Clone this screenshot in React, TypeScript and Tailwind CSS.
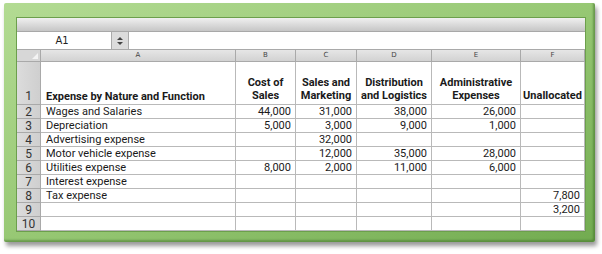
import React from 'react';

interface Row {
  n: number;
  label: string;
  b?: string;
  c?: string;
  d?: string;
  e?: string;
  f?: string;
}

const rows: Row[] = [
  { n: 2, label: 'Wages and Salaries', b: '44,000', c: '31,000', d: '38,000', e: '26,000' },
  { n: 3, label: 'Depreciation', b: '5,000', c: '3,000', d: '9,000', e: '1,000' },
  { n: 4, label: 'Advertising expense', c: '32,000' },
  { n: 5, label: 'Motor vehicle expense', c: '12,000', d: '35,000', e: '28,000' },
  { n: 6, label: 'Utilities expense', b: '8,000', c: '2,000', d: '11,000', e: '6,000' },
  { n: 7, label: 'Interest expense' },
  { n: 8, label: 'Tax expense', f: '7,800' },
  { n: 9, label: '', f: '3,200' },
  { n: 10, label: '' },
];

const font = { fontFamily: 'Roboto, "Liberation Sans", sans-serif' };

const cols = 'grid grid-cols-[24px_195px_60px_61px_75px_89px_64px]';
const numHead = 'flex items-center justify-center border-r border-b border-[#a9a9a9] bg-gradient-to-r from-[#dcdcdc] to-[#cfcfcf] text-[#333]';
const cell = 'border-r border-b border-[#b9b9b9] bg-white whitespace-nowrap';
const numCell = `${cell} flex items-center justify-end pr-[4px]`;
const headCell = `${cell} flex items-end justify-center text-center pb-[2px]`;

function Spinner() {
  return (
    <svg width="8" height="10" viewBox="0 0 8 10">
      <path d="M4 1 L7 4 H1 Z" fill="#444" />
      <path d="M4 9 L7 6 H1 Z" fill="#444" />
    </svg>
  );
}

export default function App() {
  return (
    <div className="w-[602px] h-[254px] bg-white pl-[4px] pt-[3px]">
      <div className="w-[591px] h-[239px] rounded-[2px] bg-gradient-to-br from-[#b3db93] via-[#97c874] to-[#72ab50] pl-[13px] pt-[15px] pr-[10px] pb-[11px] shadow-[2px_4px_4px_rgba(0,0,0,0.4),inset_-2px_-2px_2px_rgba(60,110,40,0.5)]">
        <div className="w-[568px] h-[213px] bg-white overflow-hidden shadow-[0_0_0_1px_#6c9f4c]" style={font}>
          {/* toolbar */}
          <div className="h-[14px] bg-gradient-to-b from-[#f0f0f0] to-[#c6c6c6] border-b border-[#a8a8a8]" />
          {/* formula bar */}
          <div className="flex h-[18px] border-b border-[#a9a9a9] bg-white">
            <div className="w-[94px] flex items-center justify-center text-[10px] text-[#222] pr-[4px]" style={{ fontFamily: '"DejaVu Sans", sans-serif' }}>
              A1
            </div>
            <div className="w-[18px] flex items-center justify-center bg-[#dcdcdc] border-x border-[#aaa]">
              <Spinner />
            </div>
            <div className="flex-1" />
          </div>
          {/* column headers */}
          <div className={`${cols} h-[12px] text-[7px] text-[#444]`} style={{ fontFamily: '"DejaVu Sans", sans-serif' }}>
            <div className="relative border-r border-b border-[#a9a9a9] bg-[#d7d7d7]">
              <div className="absolute right-[2px] bottom-[2px] w-0 h-0 border-l-[6px] border-l-transparent border-b-[6px] border-b-[#f4f4f4]" />
            </div>
            {['A', 'B', 'C', 'D', 'E', 'F'].map((l) => (
              <div key={l} className="flex items-center justify-center border-r border-b border-[#a9a9a9] bg-gradient-to-b from-[#e6e6e6] to-[#d2d2d2]">
                {l}
              </div>
            ))}
          </div>
          {/* row 1 */}
          <div className={`${cols} h-[43px] text-[11px] leading-[13px] font-bold text-[#1a1a1a]`}>
            <div className={`${numHead} items-end pb-[1px] font-normal text-[12px]`}>1</div>
            <div className={`${cell} flex items-end pl-[5px] pb-[1px]`}>Expense by Nature and Function</div>
            <div className={headCell}>Cost of<br />Sales</div>
            <div className={headCell}>Sales and<br />Marketing</div>
            <div className={headCell}>Distribution<br />and Logistics</div>
            <div className={headCell}>Administrative<br />Expenses</div>
            <div className={headCell}>Unallocated</div>
          </div>
          {rows.map((r) => (
            <div key={r.n} className={`${cols} h-[14px] text-[11px] leading-none text-[#1a1a1a]`}>
              <div className={`${numHead} text-[12px]`}>{r.n}</div>
              <div className={`${cell} flex items-center pl-[5px]`}>{r.label}</div>
              <div className={numCell}>{r.b}</div>
              <div className={numCell}>{r.c}</div>
              <div className={numCell}>{r.d}</div>
              <div className={numCell}>{r.e}</div>
              <div className={numCell}>{r.f}</div>
            </div>
          ))}
        </div>
      </div>
    </div>
  );
}
